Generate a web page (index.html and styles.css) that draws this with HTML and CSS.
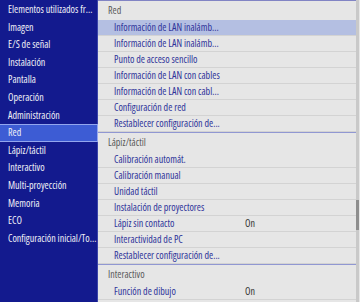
FILE: index.html
```html
<!DOCTYPE html>
<html lang="es">
<head>
  <meta charset="UTF-8">
  <meta name="viewport" content="width=device-width, initial-scale=1.0">
  <title>Menú de configuración</title>
  <link rel="stylesheet" href="styles.css">
</head>
<body>

  <ul class="sidebar">
    <li>Elementos utilizados fr...</li>
    <li>Imagen</li>
    <li>E/S de señal</li>
    <li>Instalación</li>
    <li>Pantalla</li>
    <li>Operación</li>
    <li>Administración</li>
    <li class="active">Red</li>
    <li>Lápiz/táctil</li>
    <li>Interactivo</li>
    <li>Multi-proyección</li>
    <li>Memoria</li>
    <li>ECO</li>
    <li>Configuración inicial/To...</li>
  </ul>

  <div class="panel">
    <div class="section-title">Red</div>
    <ul class="rows">
      <li class="selected"><span>Información de LAN inalámb...</span></li>
      <li><span>Información de LAN inalámb...</span></li>
      <li><span>Punto de acceso sencillo</span></li>
      <li><span>Información de LAN con cables</span></li>
      <li><span>Información de LAN con cabl...</span></li>
      <li><span>Configuración de red</span></li>
      <li><span>Restablecer configuración de...</span></li>
    </ul>

    <div class="section-title">Lápiz/táctil</div>
    <ul class="rows">
      <li><span>Calibración automát.</span></li>
      <li><span>Calibración manual</span></li>
      <li><span>Unidad táctil</span></li>
      <li><span>Instalación de proyectores</span></li>
      <li><span>Lápiz sin contacto</span><span class="value">On</span></li>
      <li><span>Interactividad de PC</span></li>
      <li><span>Restablecer configuración de...</span></li>
    </ul>

    <div class="section-title">Interactivo</div>
    <ul class="rows">
      <li><span>Función de dibujo</span><span class="value">On</span></li>
    </ul>
  </div>

  <div class="scrollbar">
    <div class="thumb"></div>
  </div>

</body>
</html>
```

FILE: styles.css
```css
body {
  margin: 0;
  width: 360px;
  height: 302px;
  overflow: hidden;
  display: flex;
  font-family: 'Open Sans', 'Noto Sans', sans-serif;
  font-stretch: 80%;
  font-size: 10px;
  background-color: #e6e6e6;
}

ul {
  list-style: none;
  margin: 0;
  padding: 0;
}

/* menú principal */
.sidebar {
  width: 97px;
  flex-shrink: 0;
  padding-top: 1px;
  background-color: #131a8e;
  border-right: 1px solid #3a44a8;
  color: #f0f0f6;
}

.sidebar li {
  height: 17.6px;
  line-height: 17.6px;
  padding-left: 8px;
  white-space: nowrap;
  overflow: hidden;
  box-sizing: border-box;
}

.sidebar .active {
  background-color: #3d5cd4;
  border: 1px solid #93a6ee;
  border-left: none;
  margin-right: -1px;
  line-height: 15.6px;
}

/* submenú */
.panel {
  flex: 1;
  overflow: hidden;
  border-top: 1px solid #8184c4;
}

.section-title {
  height: 19px;
  line-height: 19px;
  padding-left: 10px;
  color: #5a5a5a;
  white-space: nowrap;
}

.rows + .section-title {
  border-top: 1px solid #9097d2;
}

.rows li {
  display: grid;
  grid-template-columns: 131px 1fr;
  height: 15px;
  line-height: 15px;
  padding-left: 16px;
  border-bottom: 1px solid #d3d3d3;
  color: #2f349a;
  white-space: nowrap;
}

.rows .selected {
  background-color: #b4bfe2;
}

.value {
  color: #333;
}

.scrollbar {
  width: 3px;
  flex-shrink: 0;
  margin-right: 1px;
  background-color: #c9c9c9;
  padding-top: 200px;
}

.thumb {
  height: 30px;
  background-color: #8e8e8e;
}
```
